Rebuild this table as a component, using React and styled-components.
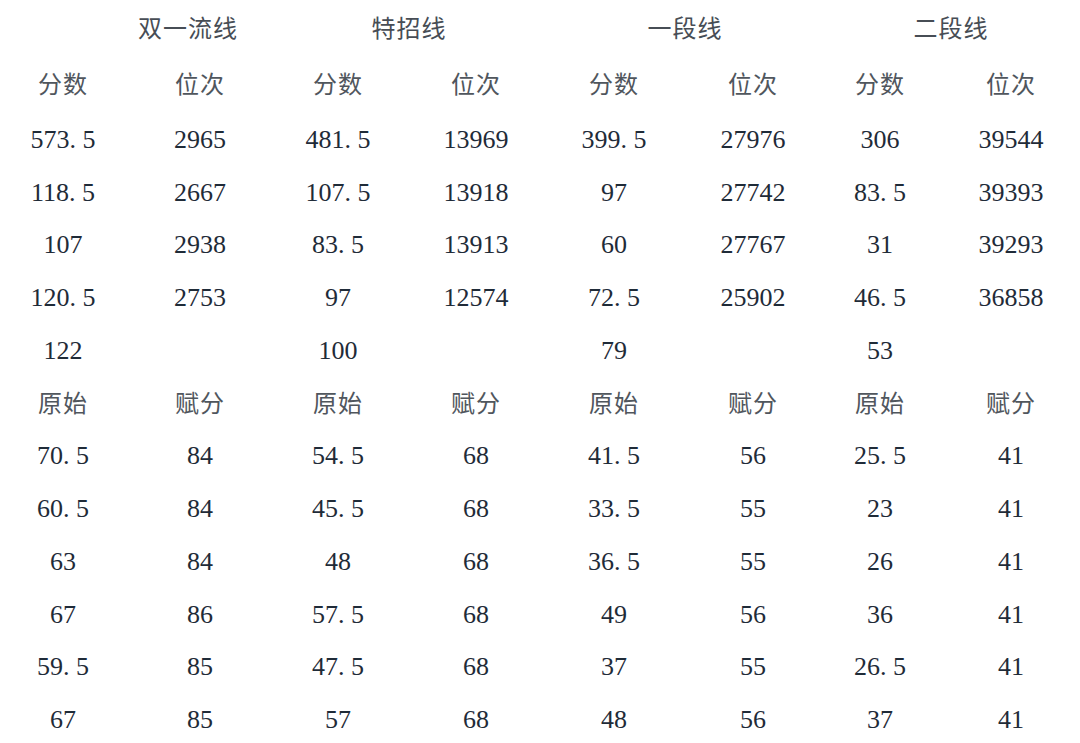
import React from "react";
import styled, { createGlobalStyle } from "styled-components";

const Global = createGlobalStyle`
  html, body { margin: 0; padding: 0; background: #ffffff; overflow: hidden; }
  #root { width: 1080px; height: 743px; overflow: hidden; }
`;

const Table = styled.div`
  display: grid;
  grid-template-columns: 126px 148px 128px 148px 128px 150px 104px 158px;
  grid-template-rows: 56px 57.5px repeat(12, 52.75px);
  width: 1090px;
  font-family: "Liberation Serif", "Noto Sans CJK SC", serif;
  font-size: 26px;
  color: #1f2b38;
`;

const GroupTitle = styled.div`
  grid-column: span 2;
  display: flex;
  align-items: center;
  justify-content: center;
  padding-bottom: 4px;
  padding-left: ${(p) => (p.$shift > 0 ? p.$shift * 2 : 0)}px;
  padding-right: ${(p) => (p.$shift < 0 ? -p.$shift * 2 : 0)}px;
  font-family: "Noto Sans CJK SC", sans-serif;
  font-size: 24px;
  color: #474d55;
  letter-spacing: 1px;
`;

const Cell = styled.div`
  display: flex;
  align-items: center;
  justify-content: center;
  white-space: pre;
`;

const Label = styled(Cell)`
  padding-bottom: 4px;
  font-family: "Noto Sans CJK SC", sans-serif;
  font-size: 24px;
  color: #50565d;
  letter-spacing: 1px;
`;

const Dot = styled.span`
  display: inline-block;
  width: 0.5em;
  text-align: left;
`;

const Num = ({ v }) => {
  if (v === "") return <Cell />;
  const parts = v.split(".");
  return (
    <Cell>
      {parts[0]}
      {parts.length > 1 && (
        <>
          <Dot>.</Dot>
          {parts[1]}
        </>
      )}
    </Cell>
  );
};

const groups = [
  { title: "双一流线", shift: 51 },
  { title: "特招线", shift: -3 },
  { title: "一段线", shift: -4 },
  { title: "二段线", shift: -8 },
];

const rows1 = [
  ["573.5", "2965", "481.5", "13969", "399.5", "27976", "306", "39544"],
  ["118.5", "2667", "107.5", "13918", "97", "27742", "83.5", "39393"],
  ["107", "2938", "83.5", "13913", "60", "27767", "31", "39293"],
  ["120.5", "2753", "97", "12574", "72.5", "25902", "46.5", "36858"],
  ["122", "", "100", "", "79", "", "53", ""],
];

const rows2 = [
  ["70.5", "84", "54.5", "68", "41.5", "56", "25.5", "41"],
  ["60.5", "84", "45.5", "68", "33.5", "55", "23", "41"],
  ["63", "84", "48", "68", "36.5", "55", "26", "41"],
  ["67", "86", "57.5", "68", "49", "56", "36", "41"],
  ["59.5", "85", "47.5", "68", "37", "55", "26.5", "41"],
  ["67", "85", "57", "68", "48", "56", "37", "41"],
];

export default function App() {
  return (
    <>
      <Global />
      <Table>
        {groups.map((g) => (
          <GroupTitle key={g.title} $shift={g.shift}>
            {g.title}
          </GroupTitle>
        ))}
        {groups.map((g) => (
          <React.Fragment key={"h" + g.title}>
            <Label>分数</Label>
            <Label>位次</Label>
          </React.Fragment>
        ))}
        {rows1.map((r, i) =>
          r.map((v, j) => <Num key={`a${i}-${j}`} v={v} />)
        )}
        {groups.map((g) => (
          <React.Fragment key={"l" + g.title}>
            <Label>原始</Label>
            <Label>赋分</Label>
          </React.Fragment>
        ))}
        {rows2.map((r, i) =>
          r.map((v, j) => <Num key={`b${i}-${j}`} v={v} />)
        )}
      </Table>
    </>
  );
}
